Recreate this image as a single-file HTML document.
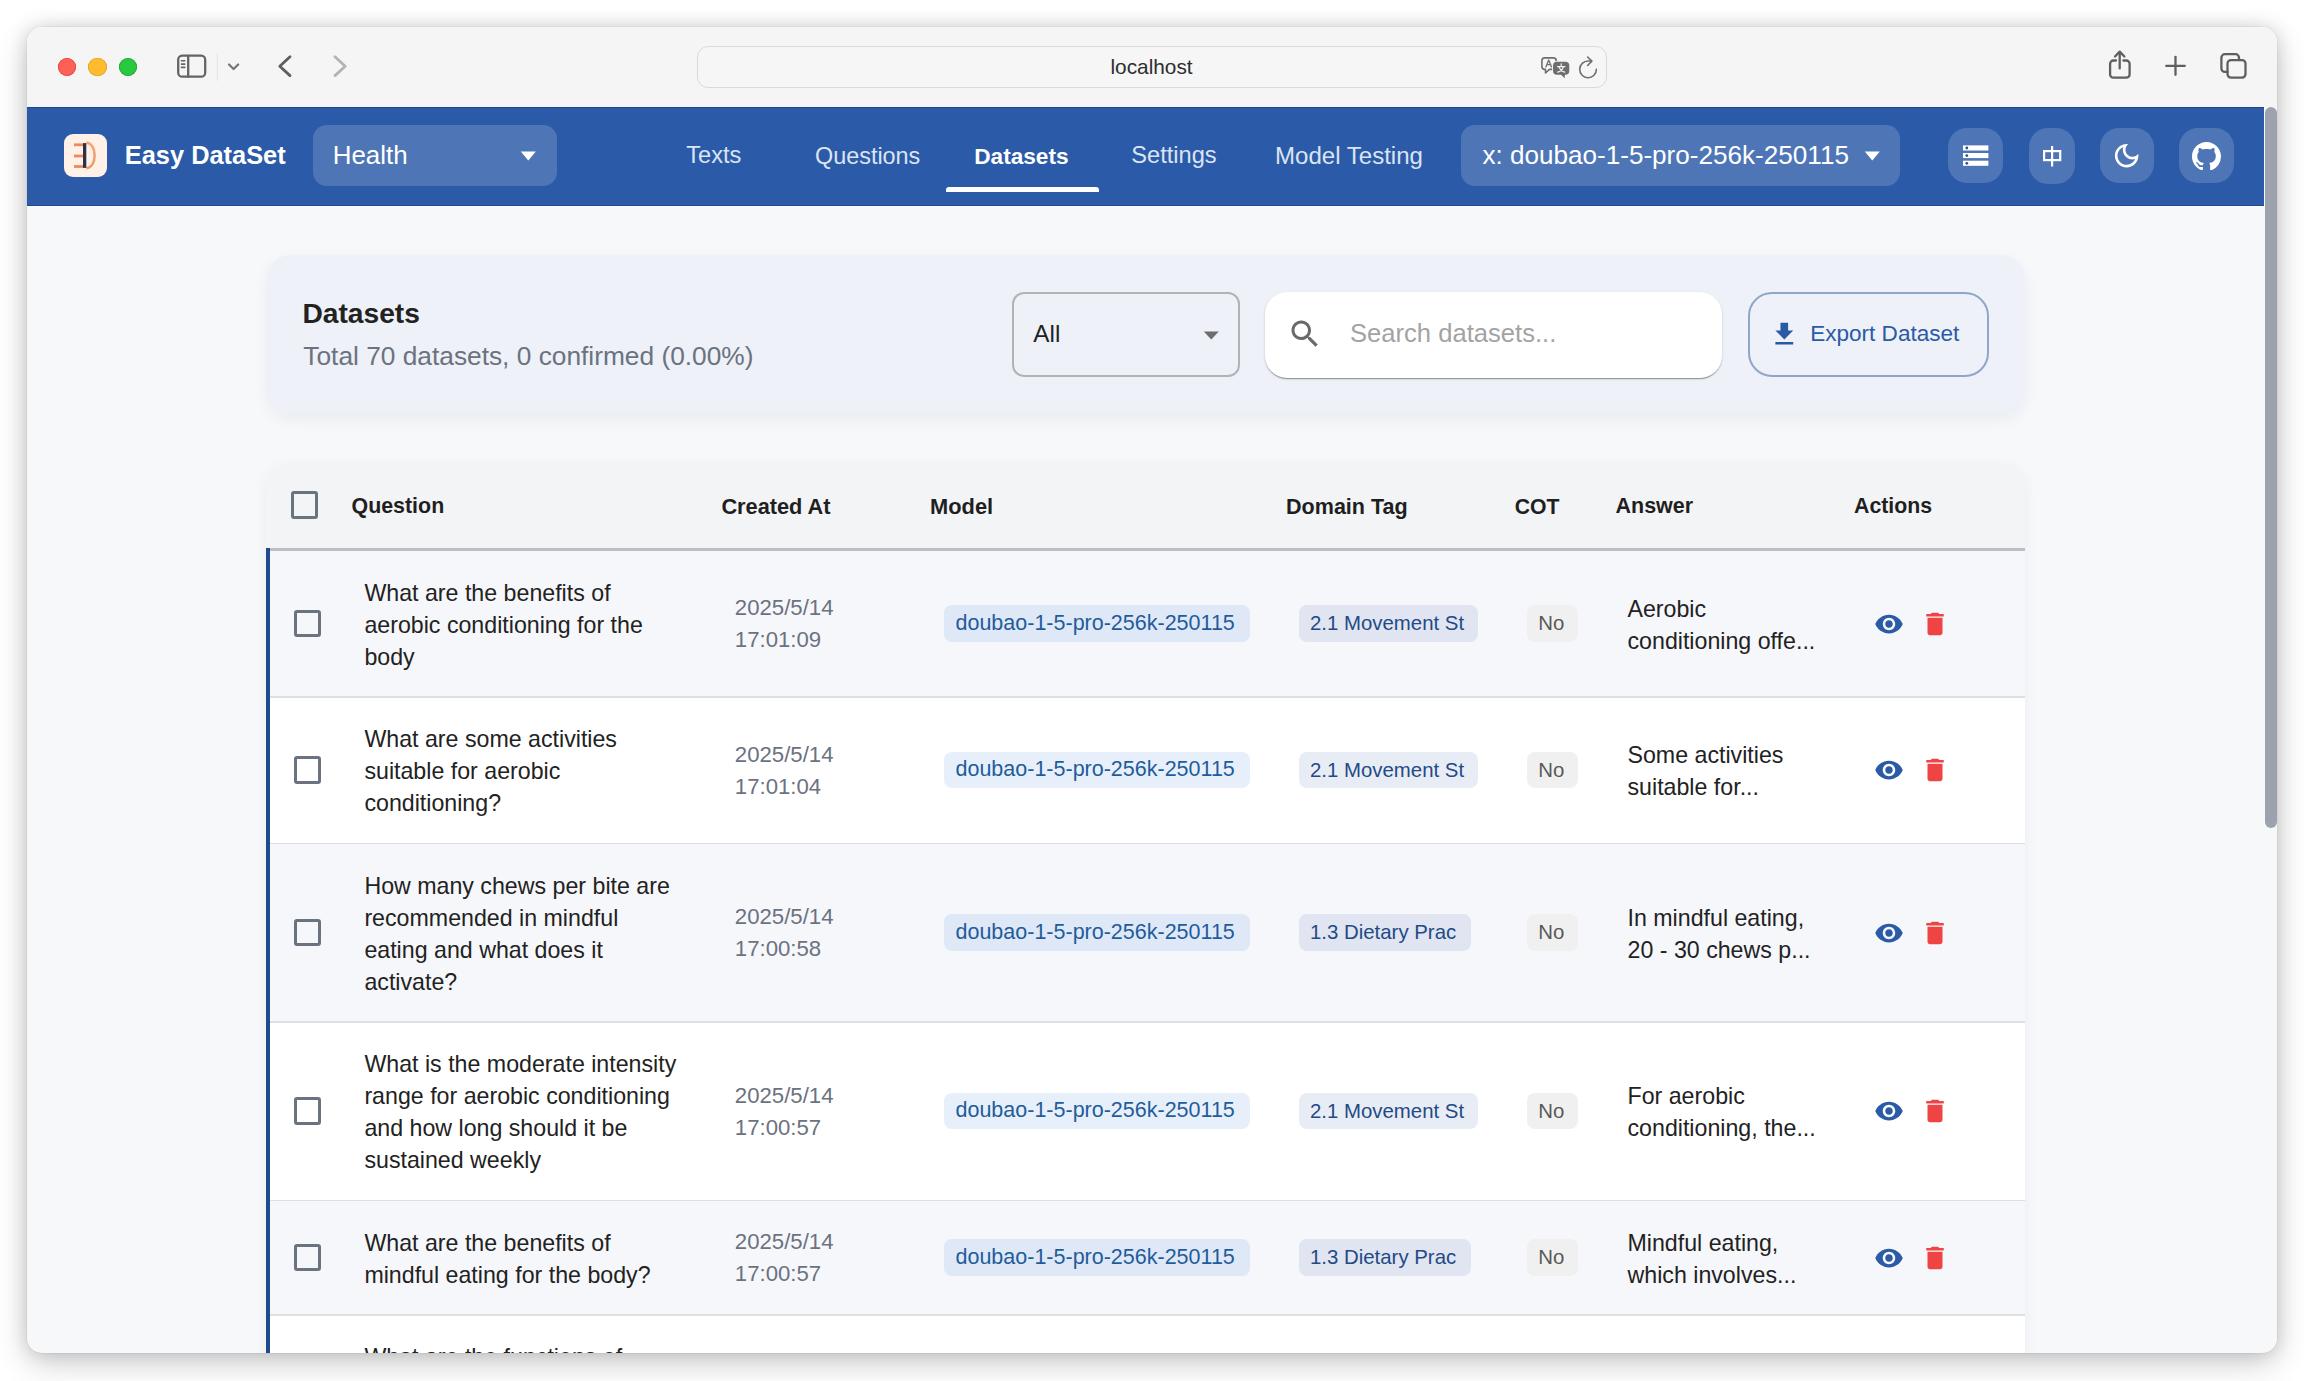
<!DOCTYPE html>
<html><head><meta charset="utf-8"><style>
*{box-sizing:border-box;margin:0;padding:0}
html,body{width:2304px;height:1381px;overflow:hidden;background:#ffffff;font-family:"Liberation Sans",sans-serif;}
#win{position:absolute;left:27px;top:27px;width:2250px;height:1326px;border-radius:15px;overflow:hidden;background:#f7f8fa;
 box-shadow:0 0 0 1px rgba(0,0,0,0.035),0 10px 32px rgba(0,0,0,0.20),0 0 18px rgba(0,0,0,0.13);}
#pc{position:absolute;left:-27px;top:-27px;width:2304px;height:1381px}
.b{position:absolute}
.t{position:absolute;line-height:1;white-space:nowrap}
.ml{position:absolute;white-space:nowrap;line-height:32px}
</style></head><body><div id="win"><div id="pc">
<div class="b" style="left:0;top:0;width:2304px;height:107px;background:#f4f5f4"></div>
<div class="b" style="left:57.9px;top:57.9px;width:18.2px;height:18.2px;border-radius:50%;background:#fe5f57;box-shadow:inset 0 0 0 0.8px #e2463f"></div>
<div class="b" style="left:88.4px;top:57.9px;width:18.2px;height:18.2px;border-radius:50%;background:#febc2e;box-shadow:inset 0 0 0 0.8px #e0a125"></div>
<div class="b" style="left:118.9px;top:57.9px;width:18.2px;height:18.2px;border-radius:50%;background:#28c840;box-shadow:inset 0 0 0 0.8px #1eaa2f"></div>
<div class="b" style="left:697px;top:46px;width:910px;height:42px;border-radius:11px;border:1px solid #d9dad9;background:#f5f6f5"></div>
<div class="t" style="left:1110.5px;top:56.9px;font-size:20.8px;color:#2e2e2e;font-weight:400;">localhost</div>

<svg class="b" style="left:0;top:0" width="2304" height="107" viewBox="0 0 2304 107" fill="none" stroke-linecap="round" stroke-linejoin="round">
<rect x="178.2" y="55.7" width="27" height="21" rx="4" stroke="#646464" stroke-width="2.3"/>
<line x1="188.2" y1="56" x2="188.2" y2="76.5" stroke="#646464" stroke-width="2.3"/>
<line x1="181.5" y1="60.8" x2="184.8" y2="60.8" stroke="#646464" stroke-width="1.6"/>
<line x1="181.5" y1="64.1" x2="184.8" y2="64.1" stroke="#646464" stroke-width="1.6"/>
<line x1="181.5" y1="67.4" x2="184.8" y2="67.4" stroke="#646464" stroke-width="1.6"/>
<line x1="217.4" y1="53.5" x2="217.4" y2="80.5" stroke="#e2e3e2" stroke-width="1"/>
<polyline points="229,64.5 233.6,69 238.2,64.5" stroke="#747474" stroke-width="2.2"/>
<polyline points="290,56.8 279.8,66.2 290,75.6" stroke="#5e5e5e" stroke-width="2.8"/>
<polyline points="335,56.8 345.2,66.2 335,75.6" stroke="#b3b3b3" stroke-width="2.8"/>
<path d="M1544.7 57.9h8.7a2.8 2.8 0 0 1 2.8 2.8v5.9a2.8 2.8 0 0 1-2.8 2.8h-4l-3.9 3.6v-3.6h-0.8a2.8 2.8 0 0 1-2.8-2.8v-5.9a2.8 2.8 0 0 1 2.8-2.8z" stroke="#6e6e6e" stroke-width="1.6"/>
<path d="M1545.9 66.9l2.8-6.9 2.8 6.9M1546.8 64.7h3.8" stroke="#6e6e6e" stroke-width="1.3"/>
<path d="M1557 61.8h8.3a4 4 0 0 1 4 4v5a4 4 0 0 1-4 4h-0.4l-0.3 3.4-3.5-3.4h-4.1a4 4 0 0 1-4-4v-5a4 4 0 0 1 4-4z" fill="#6e6e6e" stroke="#f5f6f5" stroke-width="1.8" paint-order="stroke"/>
<path d="M1561.2 63.9v1.5M1557.5 66.6h7.4M1559.1 66.9c0.8 2.5 2.6 4.5 5.7 5.3M1563.4 66.9c-0.8 2.5-2.6 4.5-5.7 5.3" stroke="#f5f6f5" stroke-width="1.2"/>
<path d="M1596.4 69.35A8.35 8.35 0 1 1 1588.2 61H1590.5" stroke="#6e6e6e" stroke-width="1.6"/>
<polyline points="1587.6,57 1591.9,61.1 1587.6,65.5" stroke="#6e6e6e" stroke-width="1.6"/>
<path d="M2116 60.5h-2.6a3.3 3.3 0 0 0-3.3 3.3v10.6a3.3 3.3 0 0 0 3.3 3.3h12.9a3.3 3.3 0 0 0 3.3-3.3v-10.6a3.3 3.3 0 0 0-3.3-3.3h-2.9" stroke="#5f5f5f" stroke-width="2.3"/>
<line x1="2119.7" y1="52.2" x2="2119.7" y2="68.4" stroke="#5f5f5f" stroke-width="2.3"/>
<polyline points="2115,56.5 2119.7,51.6 2124.4,56.5" stroke="#5f5f5f" stroke-width="2.3"/>
<line x1="2175.5" y1="56.8" x2="2175.5" y2="74.8" stroke="#5f5f5f" stroke-width="2.3"/>
<line x1="2166.2" y1="65.8" x2="2184.8" y2="65.8" stroke="#5f5f5f" stroke-width="2.3"/>
<path d="M2227.5 71.9H2224.9a3.5 3.5 0 0 1-3.5-3.5V57.7a3.5 3.5 0 0 1 3.5-3.5H2235.5a3.5 3.5 0 0 1 3.5 3.5V60.1" stroke="#5f5f5f" stroke-width="2.3"/>
<rect x="2227.5" y="60.1" width="18" height="17.5" rx="3.5" stroke="#5f5f5f" stroke-width="2.3"/>
</svg>
<div class="b" style="left:0;top:107px;width:2264px;height:99px;background:#2b5ba8"></div>
<div class="b" style="left:0;top:107px;width:2264px;height:1px;background:#1d4587"></div>
<div class="b" style="left:0;top:205px;width:2264px;height:1px;background:#224b8f"></div>
<div class="b" style="left:64px;top:134px;width:43px;height:43px;border-radius:9px;background:#fff1e7"></div>
<svg class="b" style="left:64px;top:134px" width="43" height="43" viewBox="0 0 43 43">
<defs><linearGradient id="lg" x1="0" y1="0" x2="0" y2="1"><stop offset="0" stop-color="#f2a877"/><stop offset="1" stop-color="#ef9a6a"/></linearGradient></defs>
<rect x="10" y="9.4" width="9.2" height="2.8" fill="#ec8a5f"/>
<rect x="10" y="20.6" width="9.2" height="2.8" fill="#ec8a5f"/>
<rect x="10" y="31.1" width="9.2" height="2.8" fill="#ec8a5f"/>
<path d="M22.4 8.6c5.4 0.8 8.2 6 8.2 12.8s-2.8 12-8.2 12.8" fill="none" stroke="url(#lg)" stroke-width="2.6"/>
<rect x="19" y="9.1" width="3.3" height="24.8" fill="#2f3246"/>
</svg>
<div class="t" style="left:124.8px;top:143.3px;font-size:25.4px;color:#ffffff;font-weight:700;">Easy DataSet</div>

<div class="b" style="left:312.5px;top:125px;width:244px;height:61px;border-radius:14px;background:rgba(255,255,255,0.17)"></div>
<div class="t" style="left:332.7px;top:142.6px;font-size:25.9px;color:#ffffff;font-weight:400;">Health</div>

<svg class="b" style="left:520px;top:151px" width="17" height="10"><polygon points="0.8,0.5 15.8,0.5 8.3,9.5" fill="#ffffff"/></svg>
<div class="t" style="left:686.3px;top:144.4px;font-size:23.6px;color:#dbe4f3;font-weight:400;">Texts</div>

<div class="t" style="left:815.0px;top:144.6px;font-size:23.4px;color:#dbe4f3;font-weight:400;">Questions</div>

<div class="t" style="left:1131.3px;top:144.4px;font-size:23.6px;color:#dbe4f3;font-weight:400;">Settings</div>

<div class="t" style="left:1275.0px;top:144.0px;font-size:24.05px;color:#dbe4f3;font-weight:400;">Model Testing</div>

<div class="t" style="left:974.2px;top:145.2px;font-size:22.65px;color:#ffffff;font-weight:700;">Datasets</div>

<div class="b" style="left:946px;top:187px;width:153px;height:5px;border-radius:3px 3px 0 0;background:#ffffff"></div>
<div class="b" style="left:1461px;top:125px;width:439px;height:61px;border-radius:14px;background:rgba(255,255,255,0.17)"></div>
<div class="t" style="left:1482.4px;top:142.4px;font-size:26.1px;color:#ffffff;font-weight:400;">x: doubao-1-5-pro-256k-250115</div>

<svg class="b" style="left:1864px;top:151px" width="17" height="10"><polygon points="0.8,0.5 15.8,0.5 8.3,9.5" fill="#ffffff"/></svg>
<div class="b" style="left:1948px;top:128px;width:55px;height:55px;border-radius:19px;background:rgba(255,255,255,0.17)"></div>
<div class="b" style="left:2029px;top:127.5px;width:46px;height:56px;border-radius:19px;background:rgba(255,255,255,0.17)"></div>
<div class="b" style="left:2100px;top:128px;width:54px;height:55px;border-radius:19px;background:rgba(255,255,255,0.17)"></div>
<div class="b" style="left:2179px;top:128px;width:55px;height:55px;border-radius:19px;background:rgba(255,255,255,0.17)"></div>
<svg class="b" style="left:1940px;top:120px" width="300" height="80" viewBox="0 0 300 80">
<g fill="#ffffff">
<rect x="23" y="25.4" width="25.4" height="5.1"/><rect x="23" y="33" width="25.4" height="5.1"/><rect x="23" y="40.7" width="25.4" height="5.1"/>
</g>
<g fill="#34507e"><circle cx="26.8" cy="28" r="1.4"/><circle cx="26.8" cy="35.6" r="1.4"/><circle cx="26.8" cy="43.3" r="1.4"/></g>
<g stroke="#ffffff" stroke-width="2.2" fill="none">
<rect x="104.1" y="31.1" width="16.1" height="9.0"/><line x1="112.1" y1="26" x2="112.1" y2="46.6"/>
</g>

</svg>
<svg class="b" style="left:2111.2px;top:139.7px" width="31.3" height="31.3" viewBox="0 0 24 24"><path fill="#ffffff" d="M9.37 5.51c-.18.64-.27 1.31-.27 1.99 0 4.08 3.32 7.4 7.4 7.4.68 0 1.350-.09 1.99-.27C17.45 17.19 14.93 19 12 19c-3.86 0-7-3.14-7-7 0-2.93 1.81-5.45 4.37-6.490zM12 3c-4.97 0-9 4.03-9 9s4.03 9 9 9 9-4.03 9-9c0-.46-.04-.92-.1-1.36-.98 1.37-2.58 2.26-4.4 2.260-2.98 0-5.4-2.42-5.4-5.4 0-1.81.89-3.42 2.26-4.4-.44-.06-.9-.1-1.36-.1z"/></svg>
<svg class="b" style="left:2191.5px;top:141.5px" width="29" height="28.4" viewBox="0 0 16 15.6"><path fill="#ffffff" d="M8 0C3.58 0 0 3.58 0 8c0 3.54 2.29 6.53 5.47 7.59.4.07.55-.17.55-.38 0-.19-.01-.82-.01-1.49-2.01.37-2.53-.49-2.69-.94-.09-.23-.48-.94-.82-1.13-.28-.15-.68-.52-.01-.53.63-.01 1.08.58 1.23.82.72 1.21 1.87.87 2.33.66.07-.52.28-.87.51-1.07-1.78-.2-3.64-.89-3.64-3.95 0-.87.31-1.59.82-2.15-.08-.2-.36-1.02.08-2.12 0 0 .67-.21 2.2.82.64-.18 1.32-.27 2-.27.68 0 1.36.09 2 .27 1.53-1.04 2.2-.82 2.2-.82.44 1.1.16 1.92.08 2.12.51.56.82 1.27.82 2.15 0 3.07-1.87 3.75-3.65 3.95.29.25.54.73.54 1.48 0 1.07-.01 1.93-.01 2.2 0 .21.15.46.55.38A8.013 8.013 0 0016 8c0-4.42-3.58-8-8-8z"/></svg>
<div class="b" style="left:2264px;top:107px;width:13px;height:1246px;background:#f7f8fa"></div>
<div class="b" style="left:2264.5px;top:107px;width:12px;height:721px;border-radius:6px;background:#9ca3af"></div>
<div class="b" style="left:267px;top:255px;width:1758px;height:158px;border-radius:24px;background:#eef1f8;box-shadow:0 6px 16px rgba(30,40,80,0.06)"></div>
<div class="t" style="left:302.4px;top:298.9px;font-size:28.2px;color:#222222;font-weight:700;">Datasets</div>

<div class="t" style="left:303.3px;top:342.5px;font-size:26.3px;color:#6b7280;font-weight:400;">Total 70 datasets, 0 confirmed (0.00%)</div>

<div class="b" style="left:1012px;top:292px;width:228px;height:85px;border-radius:12px;border:2px solid #b0b3b8"></div>
<div class="t" style="left:1033.3px;top:322.1px;font-size:24.3px;color:#222222;font-weight:400;">All</div>

<svg class="b" style="left:1203px;top:330.5px" width="17" height="9"><polygon points="0.8,0.4 15.8,0.4 8.3,8.4" fill="#6d6d6d"/></svg>
<div class="b" style="left:1265px;top:291.5px;width:457px;height:86px;border-radius:22px;background:#ffffff;box-shadow:0 2px 1px -1px rgba(0,0,0,.22),0 1px 1px 0 rgba(0,0,0,.16),0 1px 3px 0 rgba(0,0,0,.12)"></div>
<svg class="b" style="left:1287px;top:316.3px" width="36" height="36" viewBox="0 0 24 24"><path fill="#6a6a6a" d="M15.5 14h-.79l-.28-.27C15.41 12.59 16 11.11 16 9.5 16 5.91 13.09 3 9.5 3S3 5.91 3 9.5 5.91 16 9.5 16c1.61 0 3.09-.59 4.23-1.57l.27.28v.79l5 4.99L20.49 19l-4.99-5zm-6 0C7.01 14 5 11.99 5 9.5S7.01 5 9.5 5 14 7.01 14 9.5 11.99 14 9.5 14z"/></svg>
<div class="t" style="left:1350.0px;top:321.4px;font-size:25.6px;color:#a3a3a3;font-weight:400;">Search datasets...</div>

<div class="b" style="left:1748px;top:292px;width:241px;height:84.5px;border-radius:24px;border:2px solid #8ea6cc"></div>
<svg class="b" style="left:1768.7px;top:319px" width="30.6" height="30.6" viewBox="0 0 24 24"><path fill="#2a5aa6" d="M19 9h-4V3H9v6H5l7 7 7-7zM5 18v2h14v-2H5z"/></svg>
<div class="t" style="left:1810.2px;top:322.9px;font-size:22.56px;color:#2a5aa6;font-weight:400;">Export Dataset</div>

<div class="b" style="left:266px;top:463px;width:1759px;height:1000px;border-radius:20px 20px 0 0;background:#ffffff;overflow:hidden;box-shadow:0 4px 14px rgba(30,40,80,0.05)">
<div class="b" style="left:0;top:0;width:1759px;height:85px;background:#f3f4f6"></div>
<div class="b" style="left:0;top:85px;width:1759px;height:3px;background:#bdbec1"></div>
</div>
<div class="b" style="left:291.2px;top:491.4px;width:27.2px;height:27.2px;border-radius:3px;border:3.6px solid #6b7280"></div>
<div class="t" style="left:351.5px;top:496.2px;font-size:21.4px;color:#1f1f1f;font-weight:700;">Question</div>

<div class="t" style="left:721.4px;top:495.9px;font-size:21.75px;color:#1f1f1f;font-weight:700;">Created At</div>

<div class="t" style="left:930.0px;top:495.8px;font-size:21.85px;color:#1f1f1f;font-weight:700;">Model</div>

<div class="t" style="left:1286.0px;top:496.1px;font-size:21.55px;color:#1f1f1f;font-weight:700;">Domain Tag</div>

<div class="t" style="left:1514.8px;top:496.4px;font-size:21.2px;color:#1f1f1f;font-weight:700;">COT</div>

<div class="t" style="left:1615.5px;top:496.1px;font-size:21.5px;color:#1f1f1f;font-weight:700;">Answer</div>

<div class="t" style="left:1854.0px;top:496.3px;font-size:21.3px;color:#1f1f1f;font-weight:700;">Actions</div>

<div class="b" style="left:270px;top:551px;width:1755px;height:146.5px;background:#f6f7fb"></div>
<div class="b" style="left:270px;top:696.0px;width:1755px;height:1.5px;background:#dedfe1"></div>
<div class="b" style="left:294.2px;top:609.9px;width:27.2px;height:27.2px;border-radius:3px;border:3.6px solid #6b7280"></div>
<div class="ml" style="left:364.4px;top:576.5px;font-size:23.2px;color:#222222">What are the benefits of<br>aerobic conditioning for the<br>body</div>
<div class="ml" style="left:734.8px;top:592.4px;font-size:22.2px;color:#6b7280">2025/5/14<br>17:01:09</div>
<div class="b" style="left:944px;top:605.3px;width:306px;height:36.4px;border-radius:8px;background:rgba(25,118,210,0.105)"></div>
<div class="t" style="left:955.5px;top:612.7px;font-size:21.5px;color:#1f5c9c">doubao-1-5-pro-256k-250115</div>
<div class="b" style="left:1298.7px;top:605.3px;width:179.4px;height:36.4px;border-radius:8px;background:rgba(43,91,168,0.11)"></div>
<div class="t" style="left:1310px;top:613.0px;font-size:20.4px;color:#234a86">2.1 Movement St</div>
<div class="b" style="left:1527px;top:605.3px;width:51.4px;height:36.4px;border-radius:8px;background:#f0f0f1"></div>
<div class="t" style="left:1538.2px;top:613.0px;font-size:20.4px;color:#585858">No</div>
<div class="ml" style="left:1627.5px;top:592.5px;font-size:23.2px;color:#222222">Aerobic<br>conditioning offe...</div>
<svg class="b" style="left:1874.4px;top:608.5px" width="30" height="30" viewBox="0 0 24 24"><path fill="#2b5aa6" d="M12 4.5C7 4.5 2.730 7.61 1 12c1.73 4.39 6 7.5 11 7.5s9.27-3.11 11-7.5c-1.73-4.39-6-7.5-11-7.5zM12 17c-2.76 0-5-2.240-5-5s2.24-5 5-5 5 2.24 5 5-2.24 5-5 5zm0-8c-1.66 0-3 1.34-3 3s1.34 3 3 3 3-1.34 3-3-1.34-3-3-3z"/></svg>
<svg class="b" style="left:1920px;top:608.5px" width="30" height="30" viewBox="0 0 24 24"><path fill="#ef4444" d="M6 19c0 1.1.9 2 2 2h8c1.1 0 2-.9 2-2V7H6v12zM19 4h-3.5l-1-1h-5l-1 1H5v2h14V4z"/></svg>
<div class="b" style="left:270px;top:697.5px;width:1755px;height:146.5px;background:#ffffff"></div>
<div class="b" style="left:270px;top:842.5px;width:1755px;height:1.5px;background:#dedfe1"></div>
<div class="b" style="left:294.2px;top:756.4px;width:27.2px;height:27.2px;border-radius:3px;border:3.6px solid #6b7280"></div>
<div class="ml" style="left:364.4px;top:723.0px;font-size:23.2px;color:#222222">What are some activities<br>suitable for aerobic<br>conditioning?</div>
<div class="ml" style="left:734.8px;top:738.9px;font-size:22.2px;color:#6b7280">2025/5/14<br>17:01:04</div>
<div class="b" style="left:944px;top:751.8px;width:306px;height:36.4px;border-radius:8px;background:rgba(25,118,210,0.105)"></div>
<div class="t" style="left:955.5px;top:759.2px;font-size:21.5px;color:#1f5c9c">doubao-1-5-pro-256k-250115</div>
<div class="b" style="left:1298.7px;top:751.8px;width:179.4px;height:36.4px;border-radius:8px;background:rgba(43,91,168,0.11)"></div>
<div class="t" style="left:1310px;top:759.5px;font-size:20.4px;color:#234a86">2.1 Movement St</div>
<div class="b" style="left:1527px;top:751.8px;width:51.4px;height:36.4px;border-radius:8px;background:#f0f0f1"></div>
<div class="t" style="left:1538.2px;top:759.5px;font-size:20.4px;color:#585858">No</div>
<div class="ml" style="left:1627.5px;top:739.0px;font-size:23.2px;color:#222222">Some activities<br>suitable for...</div>
<svg class="b" style="left:1874.4px;top:755.0px" width="30" height="30" viewBox="0 0 24 24"><path fill="#2b5aa6" d="M12 4.5C7 4.5 2.730 7.61 1 12c1.73 4.39 6 7.5 11 7.5s9.27-3.11 11-7.5c-1.73-4.39-6-7.5-11-7.5zM12 17c-2.76 0-5-2.240-5-5s2.24-5 5-5 5 2.24 5 5-2.24 5-5 5zm0-8c-1.66 0-3 1.34-3 3s1.34 3 3 3 3-1.34 3-3-1.34-3-3-3z"/></svg>
<svg class="b" style="left:1920px;top:755.0px" width="30" height="30" viewBox="0 0 24 24"><path fill="#ef4444" d="M6 19c0 1.1.9 2 2 2h8c1.1 0 2-.9 2-2V7H6v12zM19 4h-3.5l-1-1h-5l-1 1H5v2h14V4z"/></svg>
<div class="b" style="left:270px;top:844px;width:1755px;height:178.5px;background:#f6f7fb"></div>
<div class="b" style="left:270px;top:1021.0px;width:1755px;height:1.5px;background:#dedfe1"></div>
<div class="b" style="left:294.2px;top:918.9px;width:27.2px;height:27.2px;border-radius:3px;border:3.6px solid #6b7280"></div>
<div class="ml" style="left:364.4px;top:869.5px;font-size:23.2px;color:#222222">How many chews per bite are<br>recommended in mindful<br>eating and what does it<br>activate?</div>
<div class="ml" style="left:734.8px;top:901.4px;font-size:22.2px;color:#6b7280">2025/5/14<br>17:00:58</div>
<div class="b" style="left:944px;top:914.3px;width:306px;height:36.4px;border-radius:8px;background:rgba(25,118,210,0.105)"></div>
<div class="t" style="left:955.5px;top:921.7px;font-size:21.5px;color:#1f5c9c">doubao-1-5-pro-256k-250115</div>
<div class="b" style="left:1298.7px;top:914.3px;width:172px;height:36.4px;border-radius:8px;background:rgba(43,91,168,0.11)"></div>
<div class="t" style="left:1310px;top:922.0px;font-size:20.4px;color:#234a86">1.3 Dietary Prac</div>
<div class="b" style="left:1527px;top:914.3px;width:51.4px;height:36.4px;border-radius:8px;background:#f0f0f1"></div>
<div class="t" style="left:1538.2px;top:922.0px;font-size:20.4px;color:#585858">No</div>
<div class="ml" style="left:1627.5px;top:901.5px;font-size:23.2px;color:#222222">In mindful eating,<br>20 - 30 chews p...</div>
<svg class="b" style="left:1874.4px;top:917.5px" width="30" height="30" viewBox="0 0 24 24"><path fill="#2b5aa6" d="M12 4.5C7 4.5 2.730 7.61 1 12c1.73 4.39 6 7.5 11 7.5s9.27-3.11 11-7.5c-1.73-4.39-6-7.5-11-7.5zM12 17c-2.76 0-5-2.240-5-5s2.24-5 5-5 5 2.24 5 5-2.24 5-5 5zm0-8c-1.66 0-3 1.34-3 3s1.34 3 3 3 3-1.34 3-3-1.34-3-3-3z"/></svg>
<svg class="b" style="left:1920px;top:917.5px" width="30" height="30" viewBox="0 0 24 24"><path fill="#ef4444" d="M6 19c0 1.1.9 2 2 2h8c1.1 0 2-.9 2-2V7H6v12zM19 4h-3.5l-1-1h-5l-1 1H5v2h14V4z"/></svg>
<div class="b" style="left:270px;top:1022.5px;width:1755px;height:178.5px;background:#ffffff"></div>
<div class="b" style="left:270px;top:1199.5px;width:1755px;height:1.5px;background:#dedfe1"></div>
<div class="b" style="left:294.2px;top:1097.4px;width:27.2px;height:27.2px;border-radius:3px;border:3.6px solid #6b7280"></div>
<div class="ml" style="left:364.4px;top:1048.0px;font-size:23.2px;color:#222222">What is the moderate intensity<br>range for aerobic conditioning<br>and how long should it be<br>sustained weekly</div>
<div class="ml" style="left:734.8px;top:1079.9px;font-size:22.2px;color:#6b7280">2025/5/14<br>17:00:57</div>
<div class="b" style="left:944px;top:1092.8px;width:306px;height:36.4px;border-radius:8px;background:rgba(25,118,210,0.105)"></div>
<div class="t" style="left:955.5px;top:1100.2px;font-size:21.5px;color:#1f5c9c">doubao-1-5-pro-256k-250115</div>
<div class="b" style="left:1298.7px;top:1092.8px;width:179.4px;height:36.4px;border-radius:8px;background:rgba(43,91,168,0.11)"></div>
<div class="t" style="left:1310px;top:1100.5px;font-size:20.4px;color:#234a86">2.1 Movement St</div>
<div class="b" style="left:1527px;top:1092.8px;width:51.4px;height:36.4px;border-radius:8px;background:#f0f0f1"></div>
<div class="t" style="left:1538.2px;top:1100.5px;font-size:20.4px;color:#585858">No</div>
<div class="ml" style="left:1627.5px;top:1080.0px;font-size:23.2px;color:#222222">For aerobic<br>conditioning, the...</div>
<svg class="b" style="left:1874.4px;top:1096.0px" width="30" height="30" viewBox="0 0 24 24"><path fill="#2b5aa6" d="M12 4.5C7 4.5 2.730 7.61 1 12c1.73 4.39 6 7.5 11 7.5s9.27-3.11 11-7.5c-1.73-4.39-6-7.5-11-7.5zM12 17c-2.76 0-5-2.240-5-5s2.24-5 5-5 5 2.24 5 5-2.24 5-5 5zm0-8c-1.66 0-3 1.34-3 3s1.34 3 3 3 3-1.34 3-3-1.34-3-3-3z"/></svg>
<svg class="b" style="left:1920px;top:1096.0px" width="30" height="30" viewBox="0 0 24 24"><path fill="#ef4444" d="M6 19c0 1.1.9 2 2 2h8c1.1 0 2-.9 2-2V7H6v12zM19 4h-3.5l-1-1h-5l-1 1H5v2h14V4z"/></svg>
<div class="b" style="left:270px;top:1201px;width:1755px;height:114.5px;background:#f6f7fb"></div>
<div class="b" style="left:270px;top:1314.0px;width:1755px;height:1.5px;background:#dedfe1"></div>
<div class="b" style="left:294.2px;top:1243.9px;width:27.2px;height:27.2px;border-radius:3px;border:3.6px solid #6b7280"></div>
<div class="ml" style="left:364.4px;top:1226.5px;font-size:23.2px;color:#222222">What are the benefits of<br>mindful eating for the body?</div>
<div class="ml" style="left:734.8px;top:1226.4px;font-size:22.2px;color:#6b7280">2025/5/14<br>17:00:57</div>
<div class="b" style="left:944px;top:1239.3px;width:306px;height:36.4px;border-radius:8px;background:rgba(25,118,210,0.105)"></div>
<div class="t" style="left:955.5px;top:1246.7px;font-size:21.5px;color:#1f5c9c">doubao-1-5-pro-256k-250115</div>
<div class="b" style="left:1298.7px;top:1239.3px;width:172px;height:36.4px;border-radius:8px;background:rgba(43,91,168,0.11)"></div>
<div class="t" style="left:1310px;top:1247.0px;font-size:20.4px;color:#234a86">1.3 Dietary Prac</div>
<div class="b" style="left:1527px;top:1239.3px;width:51.4px;height:36.4px;border-radius:8px;background:#f0f0f1"></div>
<div class="t" style="left:1538.2px;top:1247.0px;font-size:20.4px;color:#585858">No</div>
<div class="ml" style="left:1627.5px;top:1226.5px;font-size:23.2px;color:#222222">Mindful eating,<br>which involves...</div>
<svg class="b" style="left:1874.4px;top:1242.5px" width="30" height="30" viewBox="0 0 24 24"><path fill="#2b5aa6" d="M12 4.5C7 4.5 2.730 7.61 1 12c1.73 4.39 6 7.5 11 7.5s9.27-3.11 11-7.5c-1.73-4.39-6-7.5-11-7.5zM12 17c-2.76 0-5-2.240-5-5s2.24-5 5-5 5 2.24 5 5-2.24 5-5 5zm0-8c-1.66 0-3 1.34-3 3s1.34 3 3 3 3-1.34 3-3-1.34-3-3-3z"/></svg>
<svg class="b" style="left:1920px;top:1242.5px" width="30" height="30" viewBox="0 0 24 24"><path fill="#ef4444" d="M6 19c0 1.1.9 2 2 2h8c1.1 0 2-.9 2-2V7H6v12zM19 4h-3.5l-1-1h-5l-1 1H5v2h14V4z"/></svg>
<div class="b" style="left:270px;top:1315.5px;width:1755px;height:146.5px;background:#ffffff"></div>
<div class="b" style="left:270px;top:1460.5px;width:1755px;height:1.5px;background:#dedfe1"></div>
<div class="b" style="left:294.2px;top:1374.4px;width:27.2px;height:27.2px;border-radius:3px;border:3.6px solid #6b7280"></div>
<div class="ml" style="left:364.4px;top:1341.0px;font-size:23.2px;color:#222222">What are the functions of<br>placeholder<br>placeholder</div>
<div class="ml" style="left:734.8px;top:1356.9px;font-size:22.2px;color:#6b7280">2025/5/14<br>17:00:50</div>
<div class="b" style="left:944px;top:1369.8px;width:306px;height:36.4px;border-radius:8px;background:rgba(25,118,210,0.105)"></div>
<div class="t" style="left:955.5px;top:1377.2px;font-size:21.5px;color:#1f5c9c">doubao-1-5-pro-256k-250115</div>
<div class="b" style="left:1298.7px;top:1369.8px;width:172px;height:36.4px;border-radius:8px;background:rgba(43,91,168,0.11)"></div>
<div class="t" style="left:1310px;top:1377.5px;font-size:20.4px;color:#234a86">1.3 Dietary Prac</div>
<div class="b" style="left:1527px;top:1369.8px;width:51.4px;height:36.4px;border-radius:8px;background:#f0f0f1"></div>
<div class="t" style="left:1538.2px;top:1377.5px;font-size:20.4px;color:#585858">No</div>
<div class="ml" style="left:1627.5px;top:1357.0px;font-size:23.2px;color:#222222">placeholder<br>placeholder</div>
<svg class="b" style="left:1874.4px;top:1373.0px" width="30" height="30" viewBox="0 0 24 24"><path fill="#2b5aa6" d="M12 4.5C7 4.5 2.730 7.61 1 12c1.73 4.39 6 7.5 11 7.5s9.27-3.11 11-7.5c-1.73-4.39-6-7.5-11-7.5zM12 17c-2.76 0-5-2.240-5-5s2.24-5 5-5 5 2.24 5 5-2.24 5-5 5zm0-8c-1.66 0-3 1.34-3 3s1.34 3 3 3 3-1.34 3-3-1.34-3-3-3z"/></svg>
<svg class="b" style="left:1920px;top:1373.0px" width="30" height="30" viewBox="0 0 24 24"><path fill="#ef4444" d="M6 19c0 1.1.9 2 2 2h8c1.1 0 2-.9 2-2V7H6v12zM19 4h-3.5l-1-1h-5l-1 1H5v2h14V4z"/></svg>
<div class="b" style="left:266px;top:548px;width:4px;height:900px;background:#1f4a8c"></div>
</div></div></body></html>
